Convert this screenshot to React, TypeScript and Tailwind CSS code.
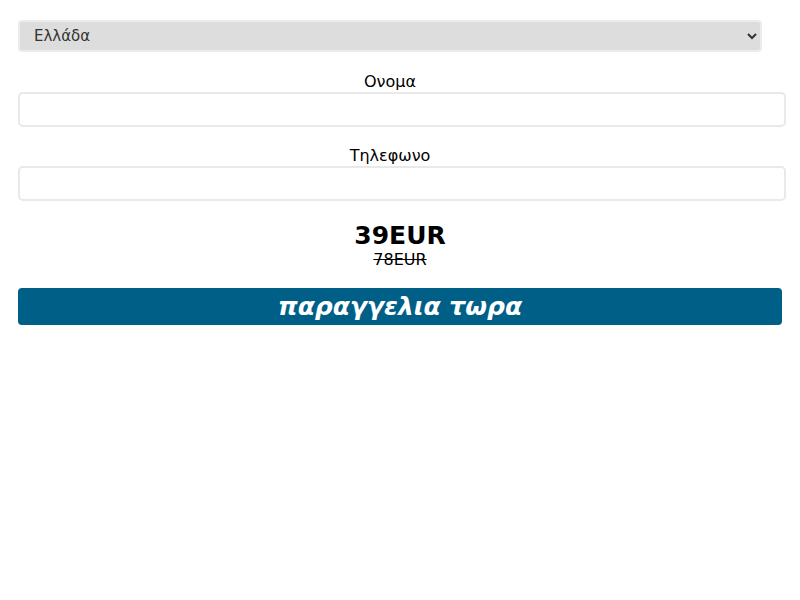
export default function App() {
  return (
    <div className="min-h-[600px] bg-white px-[18px] pt-[20px] font-['DejaVu_Sans',sans-serif] text-black">
      <select
        defaultValue="gr"
        className="block h-[32px] w-[744px] rounded-[4px] border-2 border-[#ececec] bg-[#dddddd] px-[10px] font-['DejaVu_Sans',sans-serif] text-[15px] text-[#333]"
      >
        <option value="gr">Ελλάδα</option>
      </select>

      <div className="mt-[20px] w-[744px] text-center text-[16px] leading-[20px]">Ονομα</div>
      <input
        type="text"
        className="block h-[35px] w-[768px] rounded-[5px] border-2 border-[#e9e9e9] bg-white px-3 font-['DejaVu_Sans',sans-serif] text-[16px]"
      />

      <div className="mt-[19px] w-[744px] text-center text-[16px] leading-[20px]">Τηλεφωνο</div>
      <input
        type="tel"
        className="block h-[35px] w-[768px] rounded-[5px] border-2 border-[#e9e9e9] bg-white px-3 font-['DejaVu_Sans',sans-serif] text-[16px]"
      />

      <div className="mt-[20px] w-[764px] text-center">
        <div className="text-[25px] font-bold leading-[30px]">39EUR</div>
        <div className="text-[16px] leading-[18px] line-through">78EUR</div>
      </div>

      <button
        type="button"
        className="mt-[19px] block h-[37px] w-[764px] rounded-[4px] bg-[#005f87] font-['DejaVu_Sans',sans-serif] text-[25px] font-bold italic leading-[37px] text-white"
      >
        παραγγελια τωρα
      </button>
    </div>
  )
}
